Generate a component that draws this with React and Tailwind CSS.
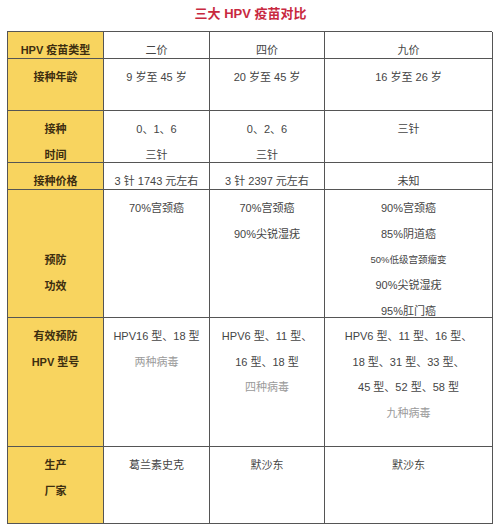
const font = { fontFamily: '"Liberation Sans", "Noto Sans CJK SC", sans-serif' }

const rows = [
  {
    h: 'h-[27px]',
    label: ['HPV 疫苗类型'],
    cells: [['二价'], ['四价'], ['九价']],
  },
  {
    h: 'h-[52px]',
    label: ['接种年龄'],
    cells: [['9 岁至 45 岁'], ['20 岁至 45 岁'], ['16 岁至 26 岁']],
  },
  {
    h: 'h-[52px]',
    label: ['接种', '时间'],
    cells: [['0、1、6', '三针'], ['0、2、6', '三针'], ['三针']],
  },
  {
    h: 'h-[27px]',
    label: ['接种价格'],
    cells: [['3 针 1743 元左右'], ['3 针 2397 元左右'], ['未知']],
  },
  {
    h: 'h-[128px]',
    label: ['预防', '功效'],
    labelPad: 'pt-[58px]',
    cells: [
      ['70%宫颈癌'],
      ['70%宫颈癌', '90%尖锐湿疣'],
      ['90%宫颈癌', '85%阴道癌', { t: '50%低级宫颈瘤变', small: true }, '90%尖锐湿疣', '95%肛门癌'],
    ],
  },
  {
    h: 'h-[129px]',
    label: ['有效预防', 'HPV 型号'],
    cells: [
      ['HPV16 型、18 型', { t: '两种病毒', muted: true }],
      ['HPV6 型、11 型、', '16 型、18 型', { t: '四种病毒', muted: true }],
      ['HPV6 型、11 型、16 型、', '18 型、31 型、33 型、', '45 型、52 型、58 型', { t: '九种病毒', muted: true }],
    ],
  },
  {
    h: 'h-[77px]',
    label: ['生产', '厂家'],
    cells: [['葛兰素史克'], ['默沙东'], ['默沙东']],
  },
]

function Line({ item }) {
  if (typeof item === 'string') return <div>{item}</div>
  return (
    <div className={item.small ? 'text-[9.5px]' : item.muted ? 'text-[#9a9a9a]' : ''}>{item.t}</div>
  )
}

export default function App() {
  return (
    <div className="w-[499px] h-[532px] bg-white overflow-hidden" style={font}>
      <div className="h-[31px] flex justify-center pt-[5px] pl-[2px]">
        <span className="text-[13px] font-bold text-[#c8293f] leading-[18px]">三大 HPV 疫苗对比</span>
      </div>
      <div className="ml-[7px] w-[485px] grid grid-cols-[96px_106px_115px_168px] border-t border-l border-[#555]">
        {rows.map((row, i) => (
          <div key={i} className="contents">
            <div className={`${row.h} bg-[#f8d45f] border-r border-b border-[#555] text-center text-[11px] font-bold text-[#3d2e10] leading-[25.7px] ${row.labelPad || 'pt-[6px]'}`}>
              {row.label.map((l, j) => <div key={j}>{l}</div>)}
            </div>
            {row.cells.map((c, k) => (
              <div key={k} className={`${row.h} border-r border-b border-[#555] text-center text-[11px] text-[#454545] leading-[25.7px] pt-[6px]`}>
                {c.map((item, j) => <Line key={j} item={item} />)}
              </div>
            ))}
          </div>
        ))}
      </div>
    </div>
  )
}
